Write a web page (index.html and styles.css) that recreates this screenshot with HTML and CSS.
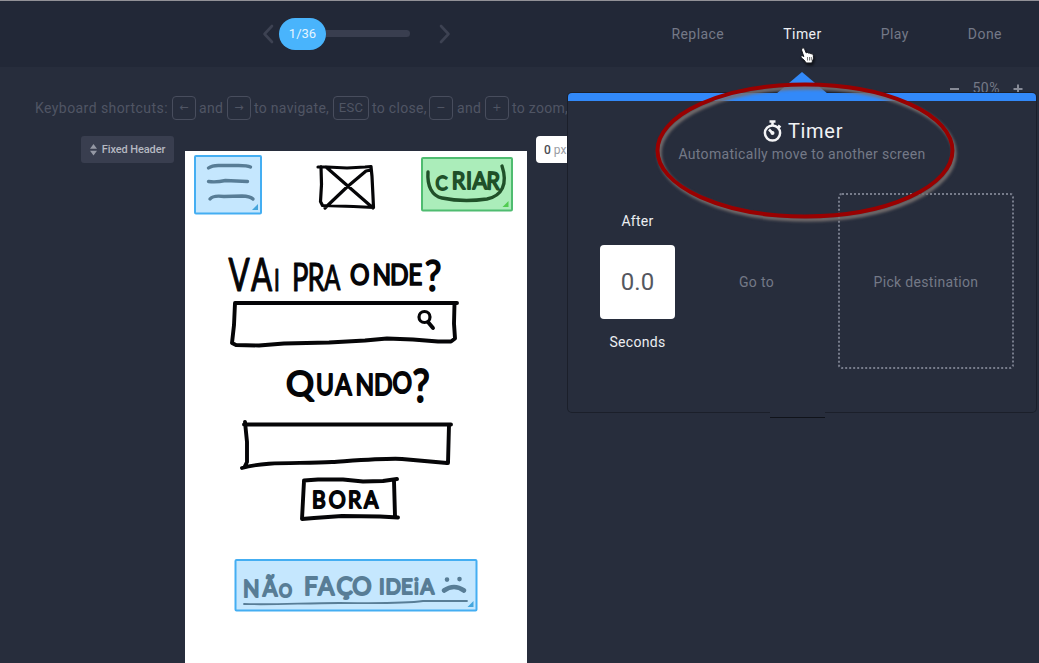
FILE: index.html
```html
<!DOCTYPE html>
<html lang="en">
<head>
<meta charset="utf-8">
<title>Timer</title>
<link rel="stylesheet" href="styles.css">
</head>
<body>
<div class="app">
  <header class="topbar">
    <div class="pager">
      <svg class="chev" width="12" height="20" viewBox="0 0 12 20"><path d="M10 2 2.500 10 10 18"/></svg>
      <div class="slider"><span class="count">1/36</span><span class="track"></span></div>
      <svg class="chev" width="12" height="20" viewBox="0 0 12 20"><path d="M2 2 9.500 10 2 18"/></svg>
    </div>
    <nav class="menu">
      <a class="replace">Replace</a><a class="active">Timer</a><a class="play">Play</a><a class="done">Done</a>
    </nav>
  </header>

  <main class="stage">
    <div class="tools">
      <div class="hints">
        <span class="lead">Keyboard shortcuts:</span><kbd>←</kbd><span>and</span><kbd>→</kbd><span>to navigate,</span><kbd class="esc">ESC</kbd><span>to close,</span><kbd>−</kbd><span>and</span><kbd>+</kbd><span>to zoom,</span>
      </div>
      <div class="zoom"><svg width="10" height="10" viewBox="0 0 10 10"><path d="M0 5h9"/></svg><span>50%</span><svg width="10" height="10" viewBox="0 0 10 10"><path d="M.5 5h9M5 .5v9"/></svg></div>
    </div>
    <div class="canvas">
      <div class="side"><div class="fixed"><svg width="7" height="12" viewBox="0 0 7 12"><path d="M3.500 0 7 4.800H0zM3.500 11.500 0 6.700h7z"/></svg>Fixed Header</div></div>
      <svg class="paper" width="342" height="512" viewBox="185 151 342 512">
        <g class="spot blue">
          <rect x="195" y="156" width="66" height="57.500" rx="1"/>
          <path class="corner" d="M258 204v6h-6z"/>
          <path class="ink" d="M208.500 168q4-3 12-2.500h18q9 0 12 1.500M208.500 181.500q8 1 17-1l22 1M210 199q3-4 14-2.500l18-.5q8 0 11 3"/>
        </g>
        <g class="spot green">
          <rect x="422" y="158" width="90" height="52.500" rx="1"/>
          <path class="corner" d="M508.500 201v6h-6z"/>
          <path class="ink" d="M428 172c-1 14 4 24 14 26 14 3 31 3 45 1 15-3 21-15 15-33"/>
          <text transform="translate(435.500 190) scale(.9 1)" x="0" font-size="20">C<tspan x="18 34 41 56" y="-1" font-size="24" rotate="0 0 0 3">RIAR</tspan></text>
        </g>
        <g class="spot blue">
          <rect x="235.500" y="560" width="241" height="50.500" rx="1"/>
          <path class="corner" d="M473.500 601v6h-6z"/>
          <text transform="translate(243 597) scale(.9 1)" x="0 22" y="0 -1" font-size="24">NÃ<tspan x="40" y="0" font-size="18">O</tspan></text>
          <text transform="translate(304 595) scale(.93 1)" x="0 15 35 52" font-size="26">FAÇO</text>
          <text transform="translate(379 594) scale(.92 1)" x="0 7 24" font-size="22">IDE<tspan x="38 45">iA</tspan></text>
          <path class="face" d="M447 579.500v.1M459.500 579v.1M444 590.500q10-7 20 0"/>
          <path class="rule" d="M244 604c30 1 60-1 95-1 30 0 63 1 84-2h44"/>
        </g>
        <g class="pen">
          <path d="M318 167h9l20 1 18-1 6-.500 1 10 1 20 .500 11-20-1-31-1-2-4 1-17-.500-18M326 167l47 41M371 170l-5 1-19 16-21 20-1 1"/>
          <path class="bold" d="M235 303h222M235 303l-1 22-2 18 4 2 23 .500 25-2 45-1 36-2 22-2 26 1 25 2h13l4-3-1-15 .500-20"/>
          <path class="bold" d="M244 424.500h207M245 422l2 20v20l-2 4M242 468c24-7 58-4 90-6 31-2 57-4 70-3l45 4M449 425l-1 38"/>
          <path class="bold" d="M304 480.500l14-1 25 0 20 2 20-.500 14-2M304 481l-2 38 12-1 28-2 38 .500 18 1M394 481l1 35"/>
          <circle cx="424.500" cy="317" r="5.500"/><path class="bold" d="M428 322l5 6"/>
        </g>
        <g class="script">
          <text transform="translate(228.500 291) scale(.68 1)" x="0 33" font-size="46">VA<tspan x="67" font-size="30">I</tspan></text>
          <text transform="translate(292 291) scale(.7 1)" x="0 22" font-size="39">PR<tspan x="46" y="-1" font-size="34">A</tspan></text>
          <text class="mid" transform="translate(350 284.500) scale(.87 1)" x="0 26 46 67" font-size="28">ONDE<tspan x="86" y="6" font-size="43">?</tspan></text>
          <text class="heavy" transform="translate(286 396)" font-size="35">Q</text>
          <text class="heavy" transform="translate(316 394.500) scale(.84 1)"><tspan x="0 23 47 69 91" y="0 0 0 0 -2" font-size="29">UANDO</tspan><tspan x="115" y="7" font-size="46">?</tspan></text>
          <text class="heavy" transform="translate(312 508) scale(.88 1)" x="0 19 41 59" font-size="24">BORA</text>
        </g>
      </svg>
      <div class="px"><b>0</b> px</div>
    </div>
  </main>

  <section class="panel">
    <svg class="arrow" width="52" height="22" viewBox="0 0 52 22"><path d="M26 0 52 22H0z"/></svg>
    <h1><svg width="20" height="22" viewBox="0 0 20 22"><circle cx="9.500" cy="13" r="7.600"/><path d="M6.500 1.500h6M9.500 2v4M15 5.500l2.500 2M9.500 13 6 9.500"/><circle class="hub" cx="9.500" cy="13" r="2"/></svg>Timer</h1>
    <p class="sub">Automatically move to another screen</p>
    <div class="row">
      <div class="after"><span>After</span><div class="num">0.0</div><span>Seconds</span></div>
      <div class="goto">Go to</div>
      <div class="pick">Pick destination</div>
    </div>
    <span class="notch"></span>
  </section>

  <svg class="ring" width="316" height="150" viewBox="650 78 316 150"><ellipse cx="805" cy="150.500" rx="147.500" ry="66"/></svg>
  <svg class="hand" width="18" height="20" viewBox="0 0 18 20"><path class="shape" d="M3 2.200c1.500-1 2.400 0 2.900 1.600l1.300 3.100c1-.7 2-.4 2.500.4.900-.5 1.800-.2 2.200.6 1.300-.4 2.200.2 2.400 1.500.4 2.600 0 4.200-.9 5.800l-.5 1.800H7.200c-1.300-2.400-3.100-3.800-5.100-5.600-.7-1.200.4-2.100 1.700-1.500l1 .7L2.500 4z"/><path class="lines" d="M8.500 11v3.500M10.500 11v3.500M12.300 11v3.500"/></svg>
</div>
</body>
</html>
```

FILE: styles.css
```css
* { box-sizing: border-box; }
body { margin: 0; background: #272d3c; font-family: Roboto, "Liberation Sans", sans-serif; }
.app { position: relative; width: 1039px; height: 663px; overflow: hidden; display: flex; flex-direction: column; font-size: 14px; letter-spacing: .3px; color: #747987; }

.topbar { height: 67px; flex: none; background: #222837; border-top: 1px solid #929197; display: flex; align-items: center; justify-content: space-between; padding: 0 37px 1px 262px; }
.pager { display: flex; align-items: center; }
.chev { fill: none; stroke: #3d4252; stroke-width: 2.6; stroke-linecap: round; stroke-linejoin: round; }
.slider { display: flex; align-items: center; width: 131px; margin: 0 29px 0 5px; }
.count { width: 47px; height: 32px; border-radius: 16px; background: #49b4fc; color: #e4f4ff; font-size: 13px; letter-spacing: 0; display: flex; align-items: center; justify-content: center; }
.track { flex: 1; height: 7px; border-radius: 0 4px 4px 0; background: #393e4f; }
.menu { display: flex; gap: 59px; letter-spacing: .45px; }
.menu .active { color: #eef0f4; }

.stage { flex: 1; display: flex; flex-direction: column; }
.tools { height: 69px; flex: none; display: flex; justify-content: space-between; padding: 0 16px 0 35px; }
.hints { display: grid; grid-template-columns: 137px 27px 28px 27px 79px 39px 57px 28px 28px 27px 70px; align-items: center; height: 24px; margin-top: 29px; color: #505564; white-space: nowrap; }
kbd { width: 24px; height: 24px; border: 1px solid #484d5d; border-radius: 4px; font: 11px/22px "DejaVu Sans", sans-serif; text-align: center; }
.hints .esc { width: 36px; font: 13px/22px Roboto, sans-serif; }
.hints .lead { letter-spacing: .43px; }
.zoom { display: flex; gap: 13px; margin-top: 13px; line-height: 17px; letter-spacing: .5px; }
.zoom svg { margin-top: 4px; fill: none; stroke: #878b97; stroke-width: 2; }

.canvas { flex: 1; display: flex; align-items: flex-start; }
.side { width: 185px; padding-left: 81px; }
.fixed { width: 93px; height: 27px; border-radius: 3px; background: #393e4f; color: #b5b8c1; font-size: 11px; font-weight: 500; letter-spacing: -.1px; display: flex; align-items: center; justify-content: center; gap: 5px; white-space: nowrap; }
.fixed svg { fill: #9598a4; }
.paper { margin-top: 15px; background: #fff; flex: none; }
.px { width: 60px; height: 27px; margin-left: 9px; border-radius: 4px; padding-left: 8px; line-height: 28px; background: #fff; color: #9a9ca3; font-size: 12px; letter-spacing: 0; }
.px b { color: #4b4d54; font-weight: 500; }

.paper text { font-family: Lato, sans-serif; letter-spacing: 0; stroke-linejoin: round; stroke-linecap: round; }
.spot rect { stroke-width: 2; }
.spot .ink { fill: none; stroke-width: 3.4; stroke-linecap: round; }
.blue rect { fill: #c5e7fe; stroke: #44aef2; }
.blue .corner { fill: #44a5dc; }
.blue .ink, .blue .face, .blue .rule { stroke: #587d96; fill: none; stroke-linecap: round; }
.blue text { fill: #587d96; stroke: #587d96; stroke-width: 2; }
.blue .face { stroke-width: 4.6; }
.blue .rule { stroke-width: 1.8; }
.green rect { fill: #abedba; stroke: #4fbc70; }
.green .corner { fill: #51cc51; }
.green .ink { stroke: #205029; }
.green text { fill: #205029; stroke: #205029; stroke-width: 1.8; }
.pen { fill: none; stroke: #050507; stroke-width: 3.2; stroke-linecap: round; stroke-linejoin: round; }
.pen .bold { stroke-width: 3.9; }
.script text { fill: #050507; stroke: #050507; stroke-width: 1.2; }
.script .mid { stroke-width: 1.7; }
.script .heavy { stroke-width: 2; }

.panel { position: absolute; left: 568px; top: 93px; width: 468px; height: 319px; background: #272d3c; border-top: 8px solid #3289f9; border-radius: 4px; box-shadow: 0 0 0 1px #1b1f2a; display: flex; flex-direction: column; align-items: center; }
.arrow { position: absolute; left: 208px; top: -29px; fill: #3289f9; }
.panel h1 { margin: 18px 0 0 2px; height: 24px; font-size: 20px; font-weight: 400; letter-spacing: .7px; color: #f1f2f5; display: flex; align-items: center; gap: 5px; }
.panel h1 svg { fill: none; stroke: #f4f4f6; stroke-width: 2.5; }
.panel h1 .hub { fill: #f4f4f6; stroke: none; }
.sub { margin: 3px 0 0; line-height: 17px; letter-spacing: .32px; }
.row { align-self: stretch; display: flex; align-items: center; margin: 30px 22px 0 32px; height: 176px; }
.after { width: 75px; margin-top: 2px; display: flex; flex-direction: column; align-items: center; gap: 15px; color: #eceef2; line-height: 17px; }
.num { width: 75px; height: 74px; border-radius: 4px; background: #fff; color: #55575f; font-size: 24px; line-height: 74px; text-align: center; letter-spacing: 0; }
.goto { flex: 1; margin-top: 2px; text-align: center; }
.pick { width: 176px; height: 176px; border: 2px dotted #777c8b; border-radius: 4px; padding-top: 2px; display: flex; align-items: center; justify-content: center; letter-spacing: .32px; }
.notch { position: absolute; left: 202px; bottom: -6px; width: 55px; height: 8px; background: #272d3c; border-bottom: 1px solid #10131a; }

.ring { position: absolute; left: 650px; top: 78px; fill: none; stroke: #990000; stroke-width: 4; filter: drop-shadow(2px 3px 1.5px #77706f); }
.hand { position: absolute; left: 799px; top: 46px; filter: drop-shadow(1px 2px 1px #0008); }
.hand .shape { fill: #fff; stroke: #14161d; stroke-width: 1; }
.hand .lines { stroke: #555; stroke-width: .8; }
```
